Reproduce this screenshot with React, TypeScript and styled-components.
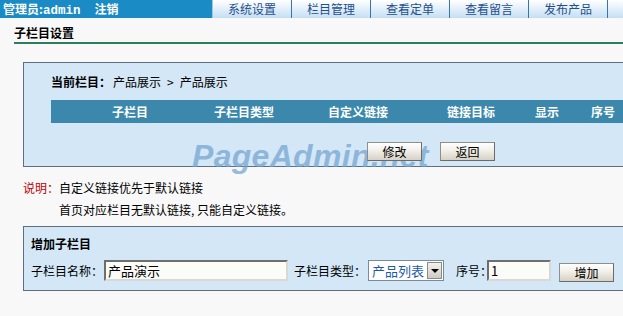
import styled, { createGlobalStyle } from "styled-components";

const GlobalStyle = createGlobalStyle`
  html, body {
    margin: 0;
    padding: 0;
    background: #f8f8f8;
    overflow: hidden;
  }
  body {
    font-family: "Noto Sans CJK SC", "DejaVu Sans", sans-serif;
    font-size: 12px;
    color: #000;
  }
`;

const Page = styled.div`
  width: 700px;
  position: relative;
`;

const TopBar = styled.div`
  display: flex;
  height: 18px;
  background: #1b8bc6;
`;

const AdminInfo = styled.div`
  width: 209px;
  padding-left: 3px;
  color: #fff;
  font-weight: bold;
  line-height: 17px;
  white-space: nowrap;
`;

const Mono = styled.span`
  font-family: "Liberation Mono", monospace;
  font-size: 12.5px;
`;

const Logout = styled.span`
  margin-left: 14px;
`;

const Tab = styled.div<{ first?: boolean }>`
  width: 78px;
  height: 18px;
  line-height: 18px;
  text-align: center;
  color: #1f4f8f;
  background: linear-gradient(#ffffff, #c4dff3);
  border-left: 1px solid ${(p) => (p.first ? "#9cc8e8" : "#3a73ad")};
`;

const Title = styled.div`
  margin: 0 0 0 14px;
  padding: 8px 0 2px;
  line-height: 14px;
  font-weight: bold;
  border-bottom: 2px solid #2f7d5d;
`;

const Panel = styled.div`
  margin-left: 23px;
  background: #d3e7f7;
  border: 1px solid #5f6f7e;
  border-right: none;
`;

const CurrentBox = styled(Panel)`
  margin-top: 18px;
  padding: 12px 0 5px 27px;
`;

const Crumb = styled.div`
  line-height: 14px;
  white-space: nowrap;
`;

const Strong = styled.span`
  font-weight: bold;
  margin-right: 2px;
`;

const Sep = styled.span`
  margin: 0 6px;
`;

const HeaderRow = styled.div`
  margin-top: 11px;
  height: 23px;
  display: grid;
  grid-template-columns: 22px 114px 114px 114px 112px 40px 72px;
  background: #3c88ac;
  color: #fff;
  font-weight: bold;
  line-height: 23px;
  text-align: center;
`;

const ButtonRow = styled.div`
  position: relative;
  z-index: 2;
  display: flex;
  gap: 18px;
  margin-top: 19px;
  padding-left: 316px;
`;

const Btn = styled.button`
  width: 55px;
  height: 19px;
  padding: 0;
  font-family: inherit;
  font-size: 12px;
  line-height: 15px;
  color: #000;
  background: linear-gradient(#ffffff 0%, #f2efe8 45%, #d6d1c6 100%);
  border: 1px solid #6b6b6b;
  border-top-color: #8e8e8e;
  border-left-color: #8e8e8e;
`;

const Watermark = styled.div`
  position: absolute;
  z-index: 1;
  left: 192px;
  top: 138px;
  font-family: "Liberation Sans", Arial, sans-serif;
  font-size: 32px;
  font-weight: bold;
  font-style: italic;
  color: rgba(110, 160, 206, 0.7);
  letter-spacing: 0.3px;
  pointer-events: none;
`;

const Notes = styled.div`
  margin: 10px 0 0 23px;
  line-height: 22px;
`;

const Red = styled.span`
  color: #c00000;
`;

const Indent = styled.div`
  padding-left: 36px;
`;

const AddBox = styled(Panel)`
  margin-top: 5px;
  padding: 10px 0 9px 7px;
`;

const AddTitle = styled.div`
  line-height: 14px;
  font-weight: bold;
`;

const FormRow = styled.div`
  display: flex;
  align-items: center;
  margin-top: 9px;
  height: 21px;
`;

const Label = styled.span<{ gap?: number }>`
  margin-left: ${(p) => p.gap ?? 0}px;
  line-height: 14px;
  white-space: nowrap;
`;

const TextInput = styled.div<{ w: number; gap?: number }>`
  box-sizing: border-box;
  width: ${(p) => p.w}px;
  height: 21px;
  margin-left: ${(p) => p.gap ?? 0}px;
  padding: 1px 2px;
  line-height: 15px;
  font-size: 13px;
  background: #fbfbf7;
  border: 2px solid;
  border-color: #6e6e6e #d8d8d4 #d8d8d4 #6e6e6e;
`;

const Select = styled.div`
  box-sizing: border-box;
  display: flex;
  align-items: center;
  width: 76px;
  height: 21px;
  margin-left: 2px;
  background: #fff;
  border: 1px solid #7a8c9c;
  color: #1d5aa8;
  font-size: 13px;
`;

const SelectText = styled.span`
  flex: 1;
  padding-left: 3px;
  line-height: 17px;
`;

const Arrow = styled.span`
  width: 15px;
  height: 17px;
  margin-right: 1px;
  display: flex;
  align-items: center;
  justify-content: center;
  background: linear-gradient(#f4f2ee, #cfcbc3);
  border: 1px solid #8a8a8a;
  box-sizing: border-box;
  &::after {
    content: "";
    border-left: 4px solid transparent;
    border-right: 4px solid transparent;
    border-top: 4px solid #000;
  }
`;

const AddBtn = styled(Btn)`
  margin: 3px 0 0 8px;
`;

const tabs = ["系统设置", "栏目管理", "查看定单", "查看留言", "发布产品", "发布"];
const cols = ["子栏目", "子栏目类型", "自定义链接", "链接目标", "显示", "序号"];

export default function App() {
  return (
    <Page>
      <GlobalStyle />
      <TopBar>
        <AdminInfo>
          管理员:<Mono>admin</Mono>
          <Logout>注销</Logout>
        </AdminInfo>
        {tabs.map((t, i) => (
          <Tab key={t} first={i === 0}>
            {t}
          </Tab>
        ))}
      </TopBar>
      <Title>子栏目设置</Title>

      <CurrentBox>
        <Crumb>
          <Strong>当前栏目：</Strong>产品展示<Sep>&gt;</Sep>产品展示
        </Crumb>
        <HeaderRow>
          <span />
          {cols.map((c) => (
            <span key={c}>{c}</span>
          ))}
        </HeaderRow>
        <ButtonRow>
          <Btn>修改</Btn>
          <Btn>返回</Btn>
        </ButtonRow>
      </CurrentBox>
      <Watermark>PageAdmin.net</Watermark>

      <Notes>
        <div>
          <Red>说明：</Red>自定义链接优先于默认链接
        </div>
        <Indent>首页对应栏目无默认链接, 只能自定义链接。</Indent>
      </Notes>

      <AddBox>
        <AddTitle>增加子栏目</AddTitle>
        <FormRow>
          <Label>子栏目名称：</Label>
          <TextInput w={184} gap={1}>产品演示</TextInput>
          <Label gap={6}>子栏目类型：</Label>
          <Select>
            <SelectText>产品列表</SelectText>
            <Arrow />
          </Select>
          <Label gap={12}>序号：</Label>
          <TextInput w={64} gap={-5}>1</TextInput>
          <AddBtn>增加</AddBtn>
        </FormRow>
      </AddBox>
    </Page>
  );
}
